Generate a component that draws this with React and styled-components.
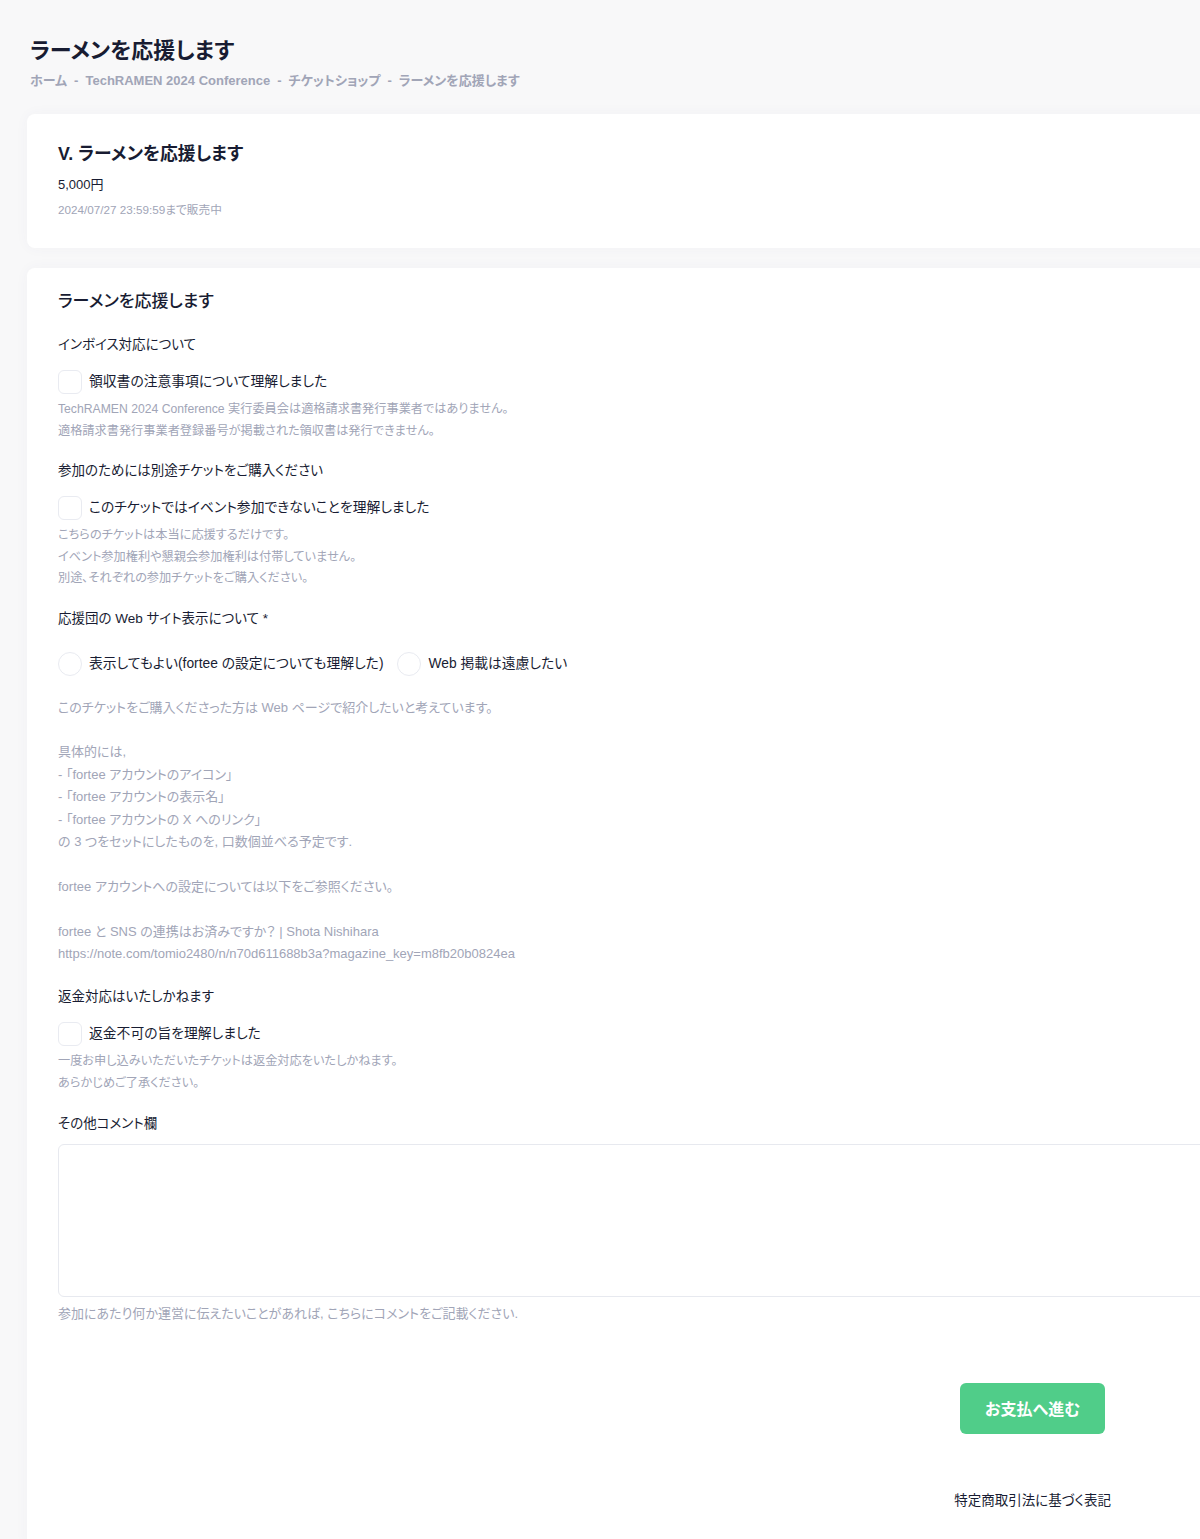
import styled, { createGlobalStyle } from "styled-components";

const GlobalStyle = createGlobalStyle`
  html, body {
    margin: 0;
    padding: 0;
    background: #f8f8f9;
    overflow-x: hidden;
  }
  body {
    font-family: "Liberation Sans", "Noto Sans CJK JP", sans-serif;
    font-feature-settings: "palt";
    color: #181c32;
  }
  * { box-sizing: border-box; }
`;

const Page = styled.div`
  width: 1240px;
  padding: 36px 0 0 27px;
`;

const Header = styled.div`
  padding-left: 3px;
  margin-bottom: 23px;
`;

const PageTitle = styled.h1`
  margin: 0;
  font-size: 22px;
  line-height: 30px;
  font-weight: 700;
  color: #181c32;
`;

const Breadcrumb = styled.div`
  margin-top: 5px;
  display: flex;
  gap: 7px;
  font-size: 13px;
  line-height: 20px;
  font-weight: 600;
  color: #a1a5b7;
`;

const Card = styled.section`
  background: #fff;
  border-radius: 8px;
  box-shadow: 0 0 14px rgba(76, 87, 125, 0.04);
  padding: ${(p) => p.$pad};
  margin-bottom: 20px;
`;

const TicketTitle = styled.h2`
  margin: 0;
  font-size: 17.8px;
  line-height: 24px;
  font-weight: 700;
`;

const Price = styled.div`
  margin-top: 9px;
  font-size: 13px;
  line-height: 20px;
`;

const Deadline = styled.div`
  margin-top: 6px;
  font-size: 11.7px;
  line-height: 18px;
  color: #a1a5b7;
`;

const FormTitle = styled.h3`
  margin: 0 0 21px;
  font-size: 17px;
  line-height: 24px;
  font-weight: 500;
`;

const Field = styled.div`
  margin-bottom: ${(p) => p.$mb || "19px"};
`;

const Label = styled.div`
  font-size: 13.5px;
  line-height: 20px;
  font-weight: 400;
  color: #181c32;
  margin-bottom: ${(p) => p.$mb || "15px"};
`;

const OptionRow = styled.div`
  display: flex;
  align-items: center;
  gap: 14px;
  height: 24px;
`;

const Option = styled.label`
  display: flex;
  align-items: center;
  gap: 7px;
  font-size: 13.8px;
  line-height: 24px;
  color: #181c32;
`;

const Box = styled.span`
  width: 24px;
  height: 24px;
  flex: none;
  background: #fff;
  border: 1px solid #e9ebf1;
  border-radius: ${(p) => (p.$round ? "50%" : "6px")};
`;

const Help = styled.div`
  margin-top: ${(p) => p.$mt || "5px"};
  font-size: ${(p) => p.$fs || "12.2px"};
  line-height: ${(p) => p.$lh || "21.5px"};
  color: #a1a5b7;
  white-space: pre-line;
`;

const TextArea = styled.textarea`
  display: block;
  width: 100%;
  height: 153px;
  margin-top: 10px;
  border: 1px solid #e7e9ef;
  border-radius: 6px;
  background: #fff;
  resize: none;
  font-family: inherit;
`;

const Actions = styled.div`
  display: flex;
  justify-content: flex-end;
  margin-top: 58px;
  padding-right: 98px;
`;

const ActionColumn = styled.div`
  display: flex;
  flex-direction: column;
  align-items: center;
  gap: 57px;
`;

const PayButton = styled.button`
  width: 145px;
  height: 51px;
  border: 0;
  border-radius: 6px;
  background: #50cd89;
  color: #fff;
  font-family: inherit;
  font-feature-settings: "palt";
  font-size: 16px;
  font-weight: 700;
`;

const LegalLink = styled.a`
  font-size: 13.5px;
  line-height: 20px;
  color: #181c32;
  text-decoration: none;
`;

const crumbs = [
  "ホーム",
  "TechRAMEN 2024 Conference",
  "チケットショップ",
  "ラーメンを応援します",
];

const webNote = `このチケットをご購入くださった方は Web ページで紹介したいと考えています。

具体的には,
- 「fortee アカウントのアイコン」
- 「fortee アカウントの表示名」
- 「fortee アカウントの X へのリンク」
の 3 つをセットにしたものを, 口数個並べる予定です.

fortee アカウントへの設定については以下をご参照ください。

fortee と SNS の連携はお済みですか？ | Shota Nishihara
https://note.com/tomio2480/n/n70d611688b3a?magazine_key=m8fb20b0824ea`;

function CheckField({ title, option, help, mb }) {
  return (
    <Field $mb={mb}>
      <Label>{title}</Label>
      <OptionRow>
        <Option>
          <Box />
          {option}
        </Option>
      </OptionRow>
      <Help>{help}</Help>
    </Field>
  );
}

export default function App() {
  return (
    <>
      <GlobalStyle />
      <Page>
        <Header>
          <PageTitle>ラーメンを応援します</PageTitle>
          <Breadcrumb>
            {crumbs.map((c, i) => (
              <span key={c}>
                {i > 0 && <span style={{ marginRight: 7 }}>-</span>}
                {c}
              </span>
            ))}
          </Breadcrumb>
        </Header>

        <Card $pad="28px 31px 29px">
          <TicketTitle>V. ラーメンを応援します</TicketTitle>
          <Price>5,000円</Price>
          <Deadline>2024/07/27 23:59:59まで販売中</Deadline>
        </Card>

        <Card $pad="22px 31px 40px">
          <FormTitle>ラーメンを応援します</FormTitle>

          <CheckField
            title="インボイス対応について"
            option="領収書の注意事項について理解しました"
            help={`TechRAMEN 2024 Conference 実行委員会は適格請求書発行事業者ではありません。
適格請求書発行事業者登録番号が掲載された領収書は発行できません。`}
          />

          <CheckField
            title="参加のためには別途チケットをご購入ください"
            option="このチケットではイベント参加できないことを理解しました"
            help={`こちらのチケットは本当に応援するだけです。
イベント参加権利や懇親会参加権利は付帯していません。
別途､それぞれの参加チケットをご購入ください。`}
          />

          <Field $mb="22px">
            <Label $mb="23px">応援団の Web サイト表示について *</Label>
            <OptionRow>
              <Option>
                <Box $round />
                表示してもよい(fortee の設定についても理解した)
              </Option>
              <Option>
                <Box $round />
                Web 掲載は遠慮したい
              </Option>
            </OptionRow>
            <Help $mt="21px" $lh="22.4px" $fs="13px">
              {webNote}
            </Help>
          </Field>

          <CheckField
            title="返金対応はいたしかねます"
            option="返金不可の旨を理解しました"
            mb="20px"
            help={`一度お申し込みいただいたチケットは返金対応をいたしかねます。
あらかじめご了承ください。`}
          />

          <Field $mb="0">
            <Label $mb="0">その他コメント欄</Label>
            <TextArea />
            <Help $mt="6px" $fs="13px">
              参加にあたり何か運営に伝えたいことがあれば, こちらにコメントをご記載ください.
            </Help>
          </Field>

          <Actions>
            <ActionColumn>
              <PayButton>お支払へ進む</PayButton>
              <LegalLink href="#">特定商取引法に基づく表記</LegalLink>
            </ActionColumn>
          </Actions>
        </Card>
      </Page>
    </>
  );
}
